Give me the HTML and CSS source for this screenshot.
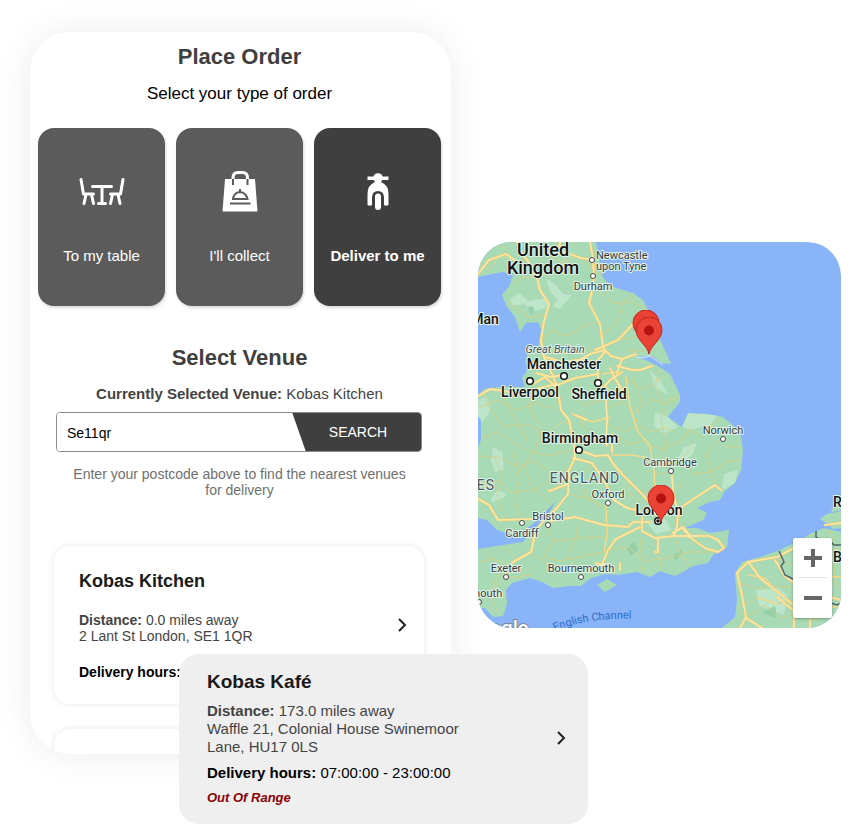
FILE: index.html
```html
<!DOCTYPE html>
<html lang="en">
<head>
    <meta charset="UTF-8">
    <meta name="viewport" content="width=device-width, initial-scale=1.0">
    <title>Place Order</title>
    <link rel="stylesheet" href="styles.css">
</head>
<body>
    <main class="page">
        <section class="phone">
            <h1>Place Order</h1>
            <p class="subtitle">Select your type of order</p>

            <div class="order-types">
                <button type="button" class="order-type">
                    <svg width="46" height="46" viewBox="0 0 46 46" fill="none" stroke="#fff" stroke-width="3" stroke-linecap="round" stroke-linejoin="round">
                        <path d="M2 11.500L4.500 26M5 26H14.500M7 26.500L5 35.500M12.500 26.500L14.500 35.500" />
                        <path d="M13.500 18.500H32.500M23 18.500V35M19.500 35.500H26.500" />
                        <path d="M44 11.500L41.500 26M41 26H31.500M39 26.500L41 35.500M33.500 26.500L31.500 35.500" />
                    </svg>
                    <span>To my table</span>
                </button>
                <button type="button" class="order-type">
                    <svg width="46" height="46" viewBox="0 0 46 46">
                        <path d="M8 11H38L40.500 43.500H5.500Z" fill="#fff" />
                        <path d="M16 11.500V10Q16 4.500 21 4.500H25.500Q30.500 4.500 30.500 10V11.500" fill="none" stroke="#fff" stroke-width="3" />
                        <path d="M16 11V17M30.500 11V17" stroke="#5b5b5b" stroke-width="2" />
                        <path d="M16 31Q17 24.500 23 24Q29 24.500 30.500 31Z" fill="#fff" stroke="#5b5b5b" stroke-width="2" />
                        <path d="M23 21V24M13 35.500H33.500" stroke="#5b5b5b" stroke-width="2" />
                    </svg>
                    <span>I'll collect</span>
                </button>
                <button type="button" class="order-type selected">
                    <svg width="46" height="46" viewBox="0 0 46 46">
                        <path d="M12.500 8.500H33.500V12H12.500Z" fill="#fff" />
                        <circle cx="23" cy="10" r="4.800" fill="#fff" />
                        <path d="M20 14H26Q33.500 17 33.500 26V37Q31 38.500 29 37V30Q29 23 23 23Q17 23 17 30V37Q15 38.500 12.500 37V26Q12.500 17 20 14Z" fill="#fff" />
                        <rect x="20" y="25.500" width="6" height="16.500" rx="3" fill="#fff" />
                    </svg>
                    <span>Deliver to me</span>
                </button>
            </div>

            <h2>Select Venue</h2>
            <p class="current"><strong>Currently Selected Venue:</strong> Kobas Kitchen</p>

            <form class="search">
                <input type="text" id="postcode" value="Se11qr" aria-label="Postcode">
                <button type="submit">SEARCH</button>
            </form>
            <p class="hint">Enter your postcode above to find the nearest venues for delivery</p>

            <article class="venue">
                <div class="venue-info">
                    <h3>Kobas Kitchen</h3>
                    <p class="address"><strong>Distance:</strong> 0.0 miles away<br>2 Lant St London, SE1 1QR</p>
                    <p class="hours"><strong>Delivery hours:</strong></p>
                </div>
                <svg class="chevron" width="10" height="14" viewBox="0 0 10 14"><path d="M2 1L8 7L2 13" /></svg>
            </article>
            <div class="next-venue"></div>
        </section>

        <section class="map">
            <svg class="map-canvas" viewBox="478 242 363 386" role="img" aria-label="Venue map">
                <rect class="sea" x="478" y="242" width="363" height="386" />
                <defs>
                    <path id="britain" d="M478 242H596L599 258L603 278L613 287L633 293L643 300L650 314L659 337L671 364L662 363L652 356L636 357L648 361L658 366L670 374L680 395V402L668 417L682 427L688 413L707 414L723 417L735 427L741 437L743 450L741 470L735 483L724 492L720 500L710 502L697 508L707 513L703 520L685 528L697 528L710 533L729 530L727 547L713 555L708 563L693 566L683 572L675 576L660 571L650 577L637 572L617 575L605 574L591 578L581 586L570 586L553 588L542 582L530 578L512 583L506 590L507 604L503 616L493 617L485 608H478V549L503 545L523 542L533 530L544 520L556 501L541 517L530 526L522 531L510 534L497 530L487 520L478 518V447L481 440V420L478 416V398L484 389L500 387L525 387L522 378L529 368L525 362L528 352L538 350L539 343L541 330L538 322L526 323L520 332L515 317L507 307L502 295L510 285L513 274L502 272L478 277Z" />
                    <path id="europe" d="M722 628L735 617L737 600L735 573L742 562L760 557L780 550L800 540L812 533L824 528L841 532V628Z" />
                    <clipPath id="land-clip">
                        <use href="#britain" />
                        <use href="#europe" />
                    </clipPath>
                    <g id="roads">
                        <path d="M478 274L489 260L506 254L517 262M517 242L522 253L536 273L540 290L549 304L544 322L541 340L544 357L553 376L558 390L561 410L569 420L574 444" />
                        <path d="M590 242L593 258L594 275L592 291L589 303L600 324L603 346L605 352L597 361M560 242L559 250L581 258L593 260" />
                        <path d="M536 373L551 377L563 375M578 361L590 354L605 350L611 356L622 359L636 354M533 384L545 377L555 386L575 378L598 374M617 373L622 359M545 357L563 362L578 360L597 362" />
                        <path d="M598 362L598 377L606 400L607 420L606 445M622 372L610 380L604 387" />
                        <path d="M595 350L618 340L632 325L645 322M610 368L616 380L622 390" />
                        <path d="M617 366L632 370L640 370L652 366" />
                        <path d="M478 396L490 389L510 392L536 389L557 384" />
                        <path d="M579 450L595 456L608 455L614 465L625 477L640 492L649 502M607 445L612 434L612 452M573 458L592 463L604 480L614 500L627 508L640 511" />
                        <path d="M574 444L575 458L569 470L568 494L556 509L545 519L536 530L531 552L513 562L507 569L505 577M549 491L568 484M587 420L575 415" />
                        <path d="M478 499L489 505L498 520L532 519L541 517M550 521L575 517L604 525L628 527L633 522L650 522" />
                        <path d="M640 527L616 539L608 550L602 565L610 564M596 563L605 566M620 570V563" />
                        <path d="M642 518L642 531L655 538L674 536L688 536L705 548L718 552L724 548L718 540L709 536L690 536L681 527M658 538V552L655 552" />
                        <path d="M674 535L677 527L678 512L673 492L672 476M677 510L695 498L715 485L721 490M673 533L683 527L690 536" />
                        <path d="M740 628L746 617L742 595L737 573L748 562L777 557L794 548M749 563L761 579L778 592L792 604M746 618L762 628" />
                        <path d="M775 560L785 576L794 583M777 597L794 611V628M810 620V628M794 548L811 541M812 592L841 600M825 525L841 523" />
                    </g>
                    <g id="roads-second">
                        <path d="M626 377L630 407L637 430L650 446L654 470L655 492M572 414L593 422L610 417M612 455L630 455L645 457" />
                        <path d="M606 505L607 535L604 552M602 374L617 372M606 387L620 400" />
                        <path d="M748 575L765 578L777 592M757 597L777 604M812 577H841M812 610L841 606" />
                    </g>
                    <symbol id="pin" viewBox="0 0 28 38">
                        <path d="M14 37C13 29 1 23 1 13A13 13 0 0 1 27 13C27 23 15 29 14 37Z" fill="#ea4335" stroke="#c5221f" />
                        <circle cx="14" cy="13.500" r="5" fill="#b31412" />
                    </symbol>
                </defs>
                <g class="land">
                    <use href="#britain" />
                    <use href="#europe" />
                    <path d="M597 585L607 579L617 585L605 592Z" />
                    <path d="M820 519L827 514L841 511V528L833 529L828 524Z" />
                    <path d="M831 509L841 505V510L832 512Z" />
                </g>
                <g class="park" clip-path="url(#land-clip)">
                    <path d="M510 299L520 293L528 301L546 298L551 306L536 311L524 304L512 306Z" />
                    <path d="M546 278L555 284L563 294L572 295L560 309L553 306L558 300L550 291Z" />
                    <path d="M493 447L502 452L504 469L495 472L491 460Z" />
                    <path d="M490 500L497 490L507 494L505 497L493 502Z" />
                    <path d="M650 371L660 380L669 395L655 388Z" />
                    <path d="M655 412L668 417L678 427L664 434L654 426Z" />
                    <path d="M682 427L688 413L718 415L710 425L690 430Z" />
                    <path d="M684 447L697 443L692 455L684 461L678 457Z" />
                    <path d="M724 474L738 470L735 483L722 490Z" />
                    <path d="M756 590L778 588L787 595L784 615L759 606Z" />
                    <path d="M646 521L665 519L671 530L656 534Z" />
                    <path d="M478 400L487 397L491 410L482 423L478 418Z" />
                </g>
                <g class="forest">
                    <path d="M528 308L532 306L534 309L531 315Z" />
                    <path d="M627 548L634 541L638 550L630 556Z" />
                    <path d="M673 555L681 550L683 553L675 561Z" />
                    <path d="M762 612L775 606L777 618L768 615Z" />
                </g>
                <g class="roads-minor" clip-path="url(#land-clip)">
                    <path d="M478 262L489 270L501 254L512 264L526 259M506 254L500 242M549 256L565 263L578 256L592 267M537 278L558 270L567 256L571 242M513 286L520 278L536 276" />
                    <path d="M508 302L520 311L530 318L545 314M541 342L552 330L566 336L584 326L598 322M593 275L607 272L617 287M594 285L612 303L633 302L648 310" />
                    <path d="M603 334L618 322L622 305L634 293M618 340L636 337L650 343M627 350L645 351M541 351L560 353L577 348L595 350" />
                    <path d="M478 408L498 400L516 410L536 403L553 409L560 400M571 396L584 404L604 400M607 408L622 402L634 412L652 399L664 404L680 398" />
                    <path d="M482 390L490 409L503 426L528 425L548 433L563 421L571 426M532 390L530 410L540 425L536 447L524 466L532 488L550 502" />
                    <path d="M478 440L496 432L507 438L523 449L548 456L573 450M500 390L514 417L528 442M478 456L498 457L517 467L534 461L552 473L571 470" />
                    <path d="M479 484L498 481L510 492L533 490L550 480L565 489M493 454L502 475L497 496L506 519M513 449L520 478L515 500L520 519" />
                    <path d="M584 404L582 425L595 436L586 447M607 425L625 431L638 425L650 432L665 428L676 433M614 434L629 444L648 441M620 376L640 388L652 386L664 376" />
                    <path d="M632 377L641 398L636 423M659 370L655 385L664 404L661 420L667 445L659 456L665 468M679 396L667 400M650 446L662 449L681 441L689 429" />
                    <path d="M689 429L702 436L720 418M689 429L690 449L681 461L694 474L711 472L727 462L741 460M720 439L706 454L711 472L716 485M723 445L741 448" />
                    <path d="M592 463L582 478L585 495L600 506M604 480L618 470L614 465M627 480L631 496L640 502M645 470L658 474L672 472M684 484L672 490L660 492M640 492L655 492" />
                    <path d="M568 494L586 498L606 508M545 519L553 541L543 557L560 561L574 558L604 552M575 517L577 536L569 555L577 572M531 552L550 566L570 567L596 568" />
                    <path d="M553 541L579 538L603 537M608 550L629 547L644 561L668 558L688 552L710 552M642 531L640 547L644 561L642 571M658 552L662 572M675 536L679 552L689 565" />
                    <path d="M479 562L493 559L509 565M486 554L500 571L490 594L498 612M481 594L494 588L505 578L531 575M505 547L515 558M531 542L536 530" />
                    <path d="M739 582L757 589L774 586L797 588M738 608L758 598L777 604L798 599M755 557L758 566L754 580M784 551L780 560L799 568M748 617L765 605L779 618L798 614" />
                    <path d="M810 534L816 548L841 550M829 529L836 549L834 581L841 590M812 566L834 565M812 620L830 615L834 628" />
                </g>
                <use href="#roads-second" class="roads-thin" />
                <use href="#roads" class="roads-casing" />
                <use href="#roads" class="roads-fill" />
                <path class="border-line" d="M779 551L784 562L781 566L785 575L793 579M816 531V537L822 541L829 540L834 545H841M831 603L837 605L841 603" />
                <path d="M635 357L643 358L650 356L663 365" fill="none" stroke="#d7e7ff" />
                <path d="M545 514L555 502L549 512Z" fill="#75a5ed" />

                <g class="towns">
                    <circle cx="592" cy="260" r="2.500" />
                    <circle cx="593" cy="276" r="2.500" />
                    <circle cx="723" cy="439" r="2.500" />
                    <circle cx="671" cy="471" r="2.500" />
                    <circle cx="608" cy="503" r="2.500" />
                    <circle cx="522" cy="523" r="2.500" />
                    <circle cx="548" cy="525" r="2.500" />
                    <circle cx="506" cy="577" r="2.500" />
                    <circle cx="581" cy="577" r="2.500" />
                    <circle cx="479" cy="602" r="2.500" />
                </g>
                <g class="cities">
                    <circle cx="564" cy="376" r="3.300" />
                    <circle cx="530" cy="381" r="3.300" />
                    <circle cx="598" cy="383" r="3.300" />
                    <circle cx="579" cy="450" r="3.300" />
                    <circle cx="658" cy="521" r="3.300" />
                    <circle cx="658" cy="521" r="1" />
                </g>
                <g class="label country">
                    <text x="543" y="256">United</text>
                    <text x="543" y="274">Kingdom</text>
                </g>
                <g class="label city">
                    <text x="485" y="324">Man</text>
                    <text x="564" y="369">Manchester</text>
                    <text x="530" y="397">Liverpool</text>
                    <text x="599" y="399">Sheffield</text>
                    <text x="580" y="443">Birmingham</text>
                    <text x="659" y="515">London</text>
                    <text x="833" y="507" class="from-left">Rotterdam</text>
                    <text x="833" y="562" class="from-left">Brussels</text>
                </g>
                <g class="label town">
                    <text x="596" y="259" class="from-left">Newcastle</text>
                    <text x="596" y="270" class="from-left">upon Tyne</text>
                    <text x="593" y="290">Durham</text>
                    <text x="723" y="434">Norwich</text>
                    <text x="670" y="466">Cambridge</text>
                    <text x="608" y="498">Oxford</text>
                    <text x="548" y="520">Bristol</text>
                    <text x="522" y="537">Cardiff</text>
                    <text x="506" y="572">Exeter</text>
                    <text x="581" y="572">Bournemouth</text>
                    <text x="479" y="597">Plymouth</text>
                    <text x="555" y="353" class="island">Great Britain</text>
                </g>
                <g class="label region">
                    <text x="585" y="483">ENGLAND</text>
                    <text x="470" y="490">WALES</text>
                </g>
                <path id="channel" d="M555 631Q590 616 650 619" fill="none" />
                <text class="water"><textPath href="#channel">English Channel</textPath></text>
                <text class="google" x="465" y="635">Google</text>

                <use href="#pin" x="632" y="310" width="28" height="38" />
                <use href="#pin" x="635" y="317" width="28" height="38" />
                <use href="#pin" x="647" y="485" width="28" height="38" />
            </svg>
            <div class="zoom">
                <button type="button" aria-label="Zoom in"><svg width="18" height="18" viewBox="0 0 18 18"><path d="M0 9H18M9 0V18" /></svg></button>
                <button type="button" aria-label="Zoom out"><svg width="18" height="18" viewBox="0 0 18 18"><path d="M0 9H18" /></svg></button>
            </div>
        </section>

        <article class="venue venue-far">
            <div class="venue-info">
                <h3>Kobas Kafé</h3>
                <p class="address"><strong>Distance:</strong> 173.0 miles away<br>Waffle 21, Colonial House Swinemoor Lane, HU17 0LS</p>
                <p class="hours"><strong>Delivery hours:</strong> 07:00:00 - 23:00:00</p>
                <p class="range">Out Of Range</p>
            </div>
            <svg class="chevron" width="10" height="14" viewBox="0 0 10 14"><path d="M2 1L8 7L2 13" /></svg>
        </article>
    </main>
</body>
</html>
```
FILE: styles.css
```css
* {
    box-sizing: border-box;
}
body {
    margin: 0;
    background-color: #fff;
    font-family: "Liberation Sans", Arial, sans-serif;
    color: #444;
}
h1, h2, h3, p {
    margin: 0;
}
button {
    border: none;
    font-family: inherit;
    cursor: pointer;
}
.page {
    display: grid;
    grid-template-columns: minmax(0, 421fr) minmax(0, 363fr);
    column-gap: 27px;
    align-items: start;
    padding: 32px 18px 14px 30px;
}

/* phone */
.phone {
    padding: 12px 10px 0 8px;
    border-radius: 40px;
    background-color: #fff;
    box-shadow: 0 0 36px rgba(0, 0, 0, 0.08);
    overflow: hidden;
    text-align: center;
}
h1, h2 {
    font-size: 22px;
    line-height: 26px;
    color: #3f3f3f;
}
.subtitle {
    margin-top: 14px;
    font-size: 17px;
    line-height: 20px;
    color: #000;
}
.order-types {
    display: grid;
    grid-template-columns: repeat(3, 1fr);
    gap: 11px;
    margin-top: 24px;
}
.order-type {
    display: flex;
    flex-direction: column;
    align-items: center;
    gap: 33px;
    padding: 40px 0 41px;
    border-radius: 16px;
    background-color: #5b5b5b;
    box-shadow: 1px 2px 3px rgba(0, 0, 0, 0.15);
    color: #fff;
    font-size: 15px;
    line-height: 18px;
}
.order-type.selected {
    background-color: #3f3f3f;
    font-weight: bold;
}
h2 {
    margin-top: 39px;
}
.current {
    margin-top: 14px;
    font-size: 15px;
    line-height: 18px;
}
.search {
    display: flex;
    margin: 9px 19px 0 18px;
    border: 1px solid #8a8a8a;
    border-radius: 4px;
    overflow: hidden;
}
.search input {
    flex: 1;
    min-width: 0;
    height: 38px;
    padding: 2px 10px 0;
    border: none;
    outline: none;
    font-family: inherit;
    font-size: 14px;
    color: #000;
}
.search button {
    width: 130px;
    margin: -1px;
    padding-left: 8px;
    background-color: #3f3f3f;
    clip-path: polygon(0 0, 100% 0, 100% 100%, 14px 100%);
    color: #fff;
    font-size: 14px;
}
.hint {
    margin: 14px 30px 0;
    font-size: 14px;
    line-height: 16px;
    color: #707070;
}

/* venue cards */
.venue {
    display: flex;
    align-items: center;
    justify-content: space-between;
    margin: 48px 17px 0 16px;
    padding: 24px 17px 24px 25px;
    border-radius: 16px;
    background-color: #fff;
    box-shadow: 0 0 6px rgba(0, 0, 0, 0.1);
    text-align: left;
    font-size: 14px;
    line-height: 16px;
}
.venue h3 {
    font-size: 18px;
    line-height: 22px;
    color: #1a1a1a;
}
.venue .address {
    margin-top: 20px;
}
.venue .hours {
    margin-top: 20px;
    color: #000;
}
.chevron {
    flex: none;
    fill: none;
    stroke: #222;
    stroke-width: 2;
}
.next-venue {
    height: 25px;
    margin: 25px 17px 0 16px;
    border-radius: 16px 16px 0 0;
    box-shadow: 0 0 6px rgba(0, 0, 0, 0.1);
}
.venue-far {
    grid-column: 1 / -1;
    z-index: 1;
    max-width: 409px;
    margin: -100px 0 0 149px;
    padding: 16px 22px 18px 28px;
    border-radius: 20px;
    background-color: #efefef;
    box-shadow: none;
    font-size: 15px;
    line-height: 18px;
}
.venue-far .venue-info {
    max-width: 280px;
}
.venue-far h3 {
    font-size: 19px;
    line-height: 24px;
}
.venue-far .address,
.venue-far .hours {
    margin-top: 8px;
}
.venue-far .range {
    margin-top: 8px;
    font-size: 13px;
    line-height: 16px;
    font-weight: bold;
    font-style: italic;
    color: #8b0000;
}

/* map */
.map {
    position: relative;
    margin-top: 210px;
    border-radius: 34px;
    overflow: hidden;
}
.map-canvas {
    display: block;
    width: 100%;
    font-family: Roboto, sans-serif;
}
.sea {
    fill: #89b4f8;
}
.land {
    fill: #a8dab5;
}
.park {
    fill: #bce5ca;
}
.forest {
    fill: #94cfa7;
}
.roads-minor {
    fill: none;
    stroke: #cfd28c;
    stroke-width: 1;
}
.roads-thin,
.roads-casing,
.roads-fill {
    fill: none;
    stroke-linejoin: round;
    stroke-linecap: round;
}
.roads-thin {
    stroke: #f3d988;
    stroke-width: 1.5;
}
.roads-casing {
    stroke: #efcb78;
    stroke-width: 2.6;
}
.roads-fill {
    stroke: #fde9a4;
    stroke-width: 1.5;
}
.border-line {
    fill: none;
    stroke: #4f6670;
    stroke-width: 1.5;
}
.towns circle,
.cities circle {
    fill: #fff;
    stroke: #444;
    stroke-width: 1;
}
.cities circle {
    stroke: #111;
    stroke-width: 1.5;
}
.label {
    text-anchor: middle;
    paint-order: stroke;
    stroke: #e4f4e8;
    stroke-width: 2;
    stroke-linejoin: round;
    fill: #333b40;
}
.label .from-left {
    text-anchor: start;
}
.label.country {
    font-size: 18px;
    font-weight: 500;
    fill: #111;
}
.label.city {
    font-size: 14px;
    font-weight: 500;
    fill: #111;
}
.label.town {
    font-size: 11px;
}
.label.region {
    font-size: 14px;
    letter-spacing: 1px;
    fill: #47545a;
}
.island {
    font-style: italic;
    fill: #47545a;
}
.water {
    font-size: 11px;
    fill: #2f6fcf;
}
.google {
    font-size: 20px;
    font-weight: 500;
    paint-order: stroke;
    stroke: #7b8796;
    stroke-width: 2;
    fill: #fff;
}
.zoom {
    position: absolute;
    right: 9px;
    bottom: 10px;
    width: 39px;
    border-radius: 2px;
    background-color: #fff;
    box-shadow: 0 1px 3px rgba(0, 0, 0, 0.3);
}
.zoom button {
    display: flex;
    align-items: center;
    justify-content: center;
    width: 100%;
    height: 40px;
    padding: 0;
    background: none;
}
.zoom button + button::before {
    content: "";
    position: absolute;
    top: 39px;
    left: 5px;
    right: 5px;
    height: 1px;
    background-color: #e6e6e6;
}
.zoom path {
    stroke: #666;
    stroke-width: 4;
}
```
